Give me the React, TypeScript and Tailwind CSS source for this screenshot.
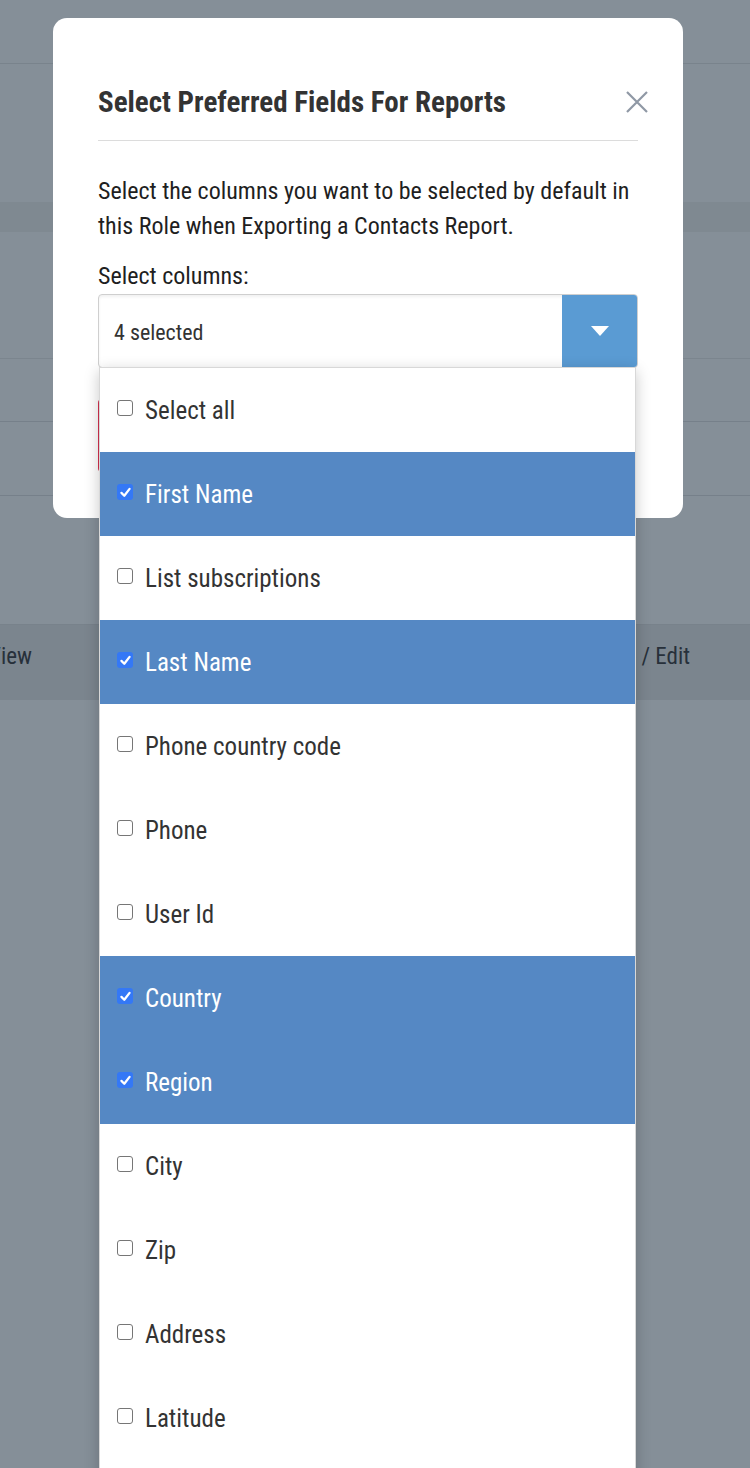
import React from "react";

const fields = [
  { name: "Select all", on: false },
  { name: "First Name", on: true },
  { name: "List subscriptions", on: false },
  { name: "Last Name", on: true },
  { name: "Phone country code", on: false },
  { name: "Phone", on: false },
  { name: "User Id", on: false },
  { name: "Country", on: true },
  { name: "Region", on: true },
  { name: "City", on: false },
  { name: "Zip", on: false },
  { name: "Address", on: false },
  { name: "Latitude", on: false },
];

function Box({ on }: { on: boolean }) {
  if (on) {
    return (
      <span className="mb-[6px] flex h-4 w-4 shrink-0 items-center justify-center rounded-[3px] bg-[#3478f6]">
        <svg viewBox="0 0 16 16" className="h-[13px] w-[13px]" fill="none" stroke="white" strokeWidth="2.8" strokeLinecap="round" strokeLinejoin="round">
          <path d="M3 8.5 L6.5 12 L13 3.5" />
        </svg>
      </span>
    );
  }
  return <span className="mb-[6px] h-4 w-4 shrink-0 rounded-[3px] border-[1.5px] border-[#767676] bg-white" />;
}

export default function App() {
  return (
    <div className="relative h-[1468px] w-full overflow-hidden bg-[#858f98] font-['Roboto_Condensed',Roboto,sans-serif] font-stretch-condensed">
      {/* dimmed page behind the modal */}
      <div className="h-[64px] border-b border-[#79838c]" />
      <div className="h-[138px]" />
      <div className="h-[30px] bg-[#7f8991]" />
      <div className="h-[127px] border-b border-[#7b858e]" />
      <div className="h-[63px] border-b border-[#76808a]" />
      <div className="h-[74px] border-b border-[#76808a]" />
      <div className="h-[128px]" />
      <div className="flex h-[76px] items-center justify-between border-t border-[#78828b] bg-[#7b858e] pb-[10px] pr-[60px] text-[23px] text-[#27303a]">
        <span className="-ml-[12px]">View</span>
        <span>Delete / Edit</span>
      </div>

      {/* modal */}
      <div className="absolute left-[53px] top-[18px] h-[500px] w-[630px] rounded-[14px] bg-white px-[45px]">
        <div className="flex items-center justify-between border-b border-[#dcdcdc] pb-[20px] pt-[66px]">
          <h2 className="text-[29px] font-bold leading-[36px] text-[#333]">Select Preferred Fields For Reports</h2>
          <svg viewBox="0 0 22 22" className="mr-[-10px] h-[22px] w-[22px]" stroke="#8f98a5" strokeWidth="2.2" fill="none">
            <path d="M1 1 L21 21 M21 1 L1 21" />
          </svg>
        </div>
        <p className="mt-[33px] text-[24px] leading-[35px] text-[#1f1f1f]">
          Select the columns you want to be selected by default in this Role when Exporting a Contacts Report.
        </p>
        <div className="mt-[15px] text-[24px] leading-[35px] text-[#1f1f1f]">Select columns:</div>
        <div className="relative">
          <div className="flex h-[74px] overflow-hidden rounded-[4px] border border-[#cfcfcf] shadow-[inset_0_2px_3px_rgba(0,0,0,0.06)]">
            <div className="flex flex-1 items-center pl-[15px] pt-[3px] text-[22px] text-[#333]">4 selected</div>
            <div className="flex w-[75px] items-center justify-center bg-[#5a9bd3]">
              <svg viewBox="0 0 18 10" className="h-[10px] w-[18px]" fill="white">
                <path d="M0 0 L18 0 L9 10 Z" />
              </svg>
            </div>
          </div>
          <div className="mt-[31px] h-[73px] w-[200px] rounded-[4px] bg-[#d6304f]" />

          {/* open dropdown */}
          <div className="absolute left-[1px] top-[73px] w-[537px] border border-[#d8d8d8] bg-white pb-[40px] shadow-[0_4px_14px_rgba(0,0,0,0.22)]">
            {fields.map((f) => (
              <div
                key={f.name}
                className={
                  "flex h-[84px] items-center gap-[12px] pl-[17px] pt-[2px] text-[25px] " +
                  (f.on ? "bg-[#5588c4] text-white" : "bg-white text-[#333]")
                }
              >
                <Box on={f.on} />
                <span>{f.name}</span>
              </div>
            ))}
          </div>
        </div>
      </div>
    </div>
  );
}
